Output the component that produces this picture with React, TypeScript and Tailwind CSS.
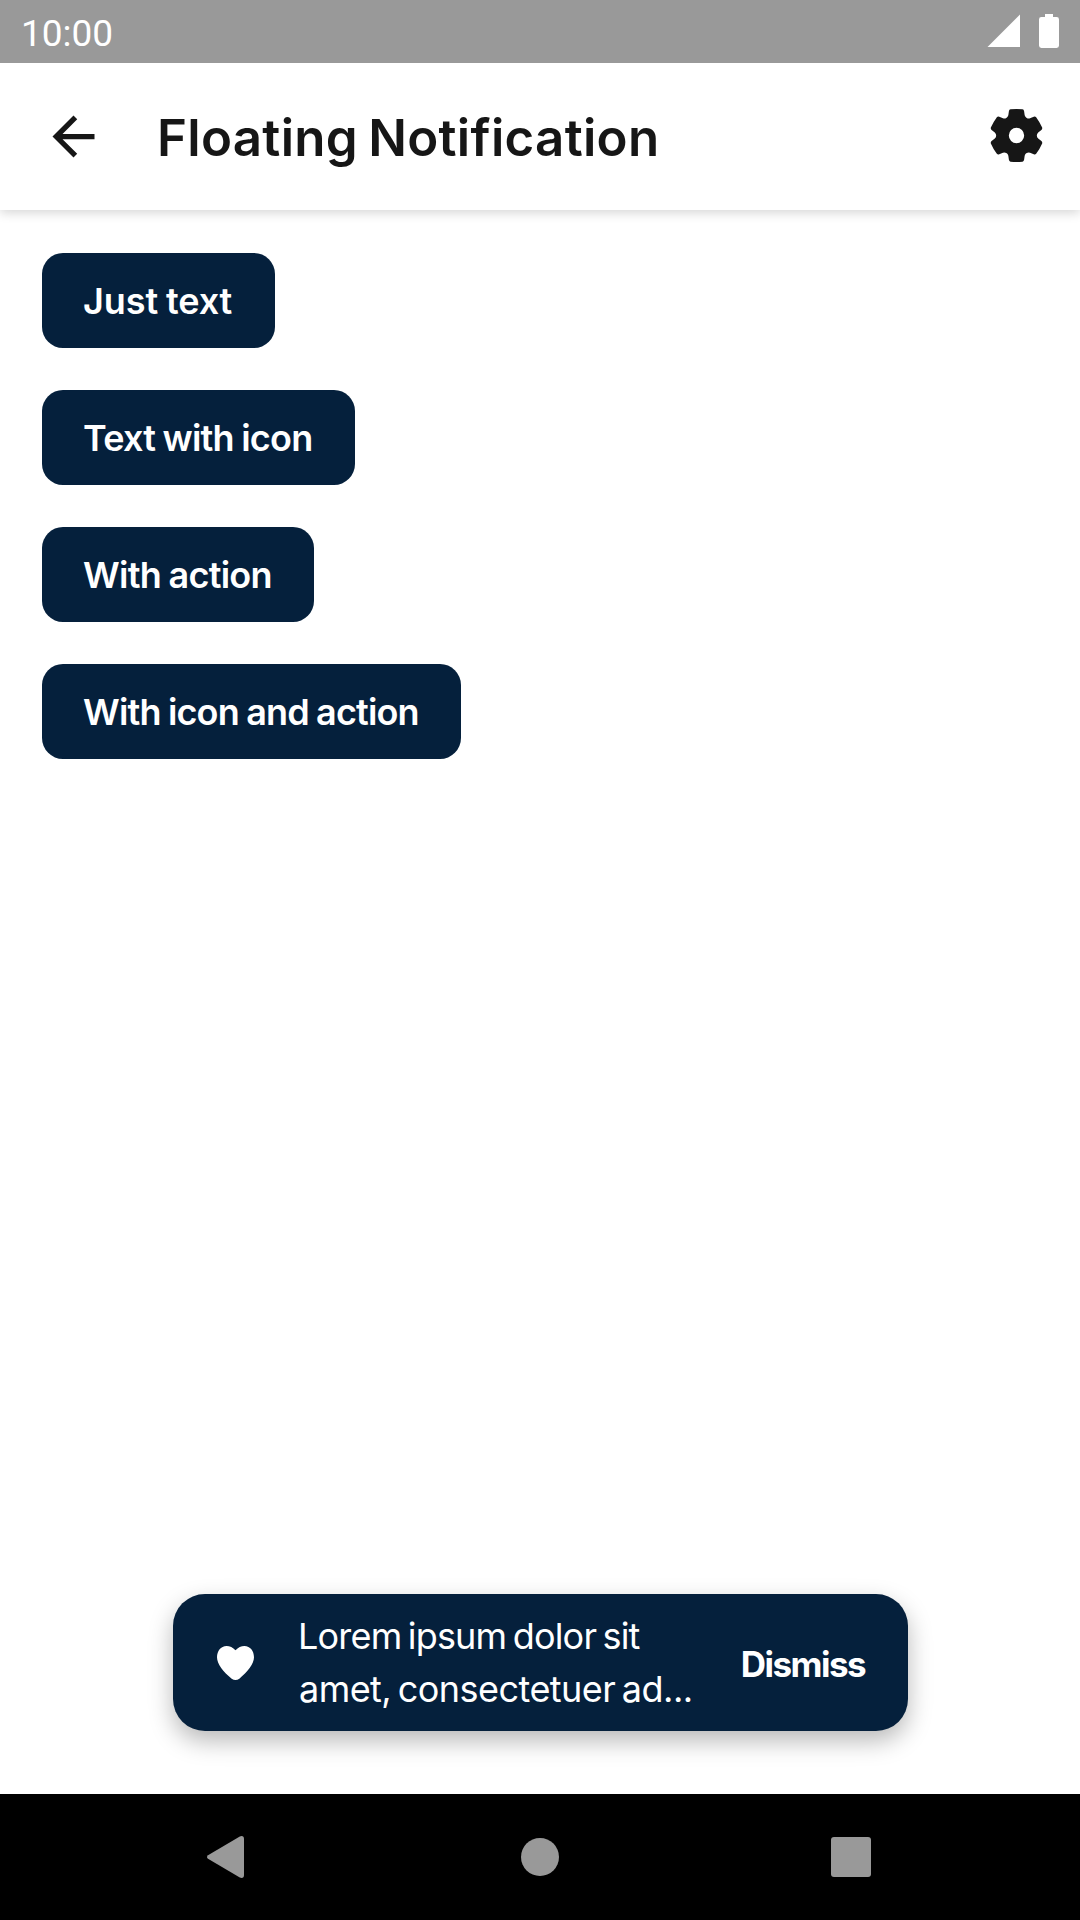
import type { ReactNode } from 'react';

// One gear tooth pointing up, as SVG commands with (x, y) pairs around the centre.
const TOOTH: [string, [number, number][]][] = [
  ['Q', [[-26, -55.4], [-24.5, -61]]],
  ['L', [[-22.8, -73]]],
  ['Q', [[-22, -77.5], [-18, -78.5]]],
  ['Q', [[0, -80.5], [18, -78.5]]],
  ['Q', [[22, -77.5], [22.8, -73]]],
  ['L', [[24.5, -61]]],
  ['Q', [[26, -55.4], [30.5, -52.8]]],
];

const GEAR =
  'M-30.5 -52.8' +
  [0, 60, 120, 180, 240, 300]
    .map((deg) => {
      const a = (deg * Math.PI) / 180;
      return TOOTH.map(
        ([cmd, pts]) =>
          cmd +
          pts
            .map(([x, y]) => `${(x * Math.cos(a) - y * Math.sin(a)).toFixed(2)} ${(x * Math.sin(a) + y * Math.cos(a)).toFixed(2)}`)
            .join(' '),
      ).join('');
    })
    .join('') +
  'ZM-23 0A23 23 0 1 0 23 0A23 23 0 1 0 -23 0Z';

function StatusBar() {
  return (
    <div className="z-10 flex h-[63px] shrink-0 items-center justify-between bg-[#999999] pr-[21px] pl-[21px] text-white">
      <span className="pt-[3px] font-[Roboto,sans-serif] text-[37px] leading-none">10:00</span>
      <div className="mb-[1px] flex items-center gap-[19px]">
        <svg className="h-[34px] w-[33px]" viewBox="0 0 33 34" fill="currentColor">
          <path d="M33 0.5V33H0.5Z" />
        </svg>
        <svg className="h-[34px] w-5" viewBox="0 0 20 34" fill="currentColor">
          <path d="M6 0H14V3H17.6Q20 3 20 5.4V31.6Q20 34 17.6 34H2.4Q0 34 0 31.6V5.4Q0 3 2.4 3H6Z" />
        </svg>
      </div>
    </div>
  );
}

function AppBar() {
  return (
    <header className="flex h-[147px] shrink-0 items-center bg-white pr-[37px] pl-[42px] text-[#161616] shadow-[0_3px_10px_rgba(0,0,0,0.16)]">
      <button aria-label="Back">
        <svg className="h-[63px] w-[63px]" viewBox="0 0 24 24" fill="currentColor">
          <path d="M20 11H7.83l5.59-5.59L12 4l-8 8 8 8 1.41-1.41L7.83 13H20v-2z" />
        </svg>
      </button>
      <h1 className="mt-[2px] ml-[52px] grow text-[51px] leading-none font-semibold tracking-[0.3px] [word-spacing:-3px]">
        Floating Notification
      </h1>
      <button aria-label="Settings" className="mb-[2px]">
        <svg className="h-[53px] w-[53px]" viewBox="-79.5 -79.5 159 159" fill="currentColor" fillRule="evenodd" overflow="visible">
          <path d={GEAR} />
        </svg>
      </button>
    </header>
  );
}

function DemoButton({ className, children }: { className: string; children: ReactNode }) {
  return (
    <button
      className={`flex h-[95px] items-center rounded-[21px] bg-[#05203c] pl-[41px] text-[36px] leading-none font-semibold whitespace-nowrap text-white [word-spacing:-1px] ${className}`}
    >
      {children}
    </button>
  );
}

function Toast() {
  return (
    <div className="flex h-[137px] w-[735px] items-center rounded-[32px] bg-[#05203c] pr-[43px] pl-[44px] text-[36px] text-white shadow-[0_10px_24px_rgba(0,0,0,0.28)]">
      <svg className="h-[34px] w-[37px] shrink-0" viewBox="203 228 111 102" fill="currentColor">
        <path d="M258.500 241C251 232 241 228 232 228C214 228 203 243 203 262C203 282 222 307 247 326Q258.500 334 270 326C294 307 314 282 314 262C314 243 303 228 285 228C276 228 266 232 258.500 241Z" />
      </svg>
      <p className="ml-[44px] grow leading-[53px] whitespace-nowrap [word-spacing:-3px]">
        <span className="block tracking-[-0.8px]">Lorem ipsum dolor sit</span>
        <span className="ml-[1px] block tracking-[-0.54px]">amet, consectetuer ad...</span>
      </p>
      <button className="mt-[4px] text-[35px] leading-none font-bold tracking-[-1.55px]">Dismiss</button>
    </div>
  );
}

function NavBar() {
  return (
    <nav className="flex h-[126px] shrink-0 items-center justify-between bg-black pr-[209px] pl-[206px] text-[#999999]">
      <svg className="h-[42px] w-[38px]" viewBox="0 0 38 42" fill="currentColor">
        <path d="M2 19.200L33.800 0.400Q38 -0.800 38 3V39Q38 42.800 33.800 41.600L2 22.800Q0 21 2 19.200Z" />
      </svg>
      <div className="ml-[5px] h-[38px] w-[38px] rounded-full bg-current" />
      <div className="h-10 w-10 rounded-[3px] bg-current" />
    </nav>
  );
}

export default function App() {
  return (
    <div className="flex h-[1920px] w-[1080px] flex-col overflow-hidden bg-white font-[Inter,sans-serif]">
      <StatusBar />
      <AppBar />
      <main className="flex grow flex-col items-start gap-[42px] px-[42px] pt-[43px]">
        <DemoButton className="w-[233px] tracking-[-0.1px]">Just text</DemoButton>
        <DemoButton className="w-[313px] tracking-[-0.77px]">Text with icon</DemoButton>
        <DemoButton className="w-[272px] tracking-[-0.72px]">With action</DemoButton>
        <DemoButton className="w-[419px] tracking-[-0.83px]">With icon and action</DemoButton>
        <div className="mt-auto mb-[63px] ml-[131px]">
          <Toast />
        </div>
      </main>
      <NavBar />
    </div>
  );
}
